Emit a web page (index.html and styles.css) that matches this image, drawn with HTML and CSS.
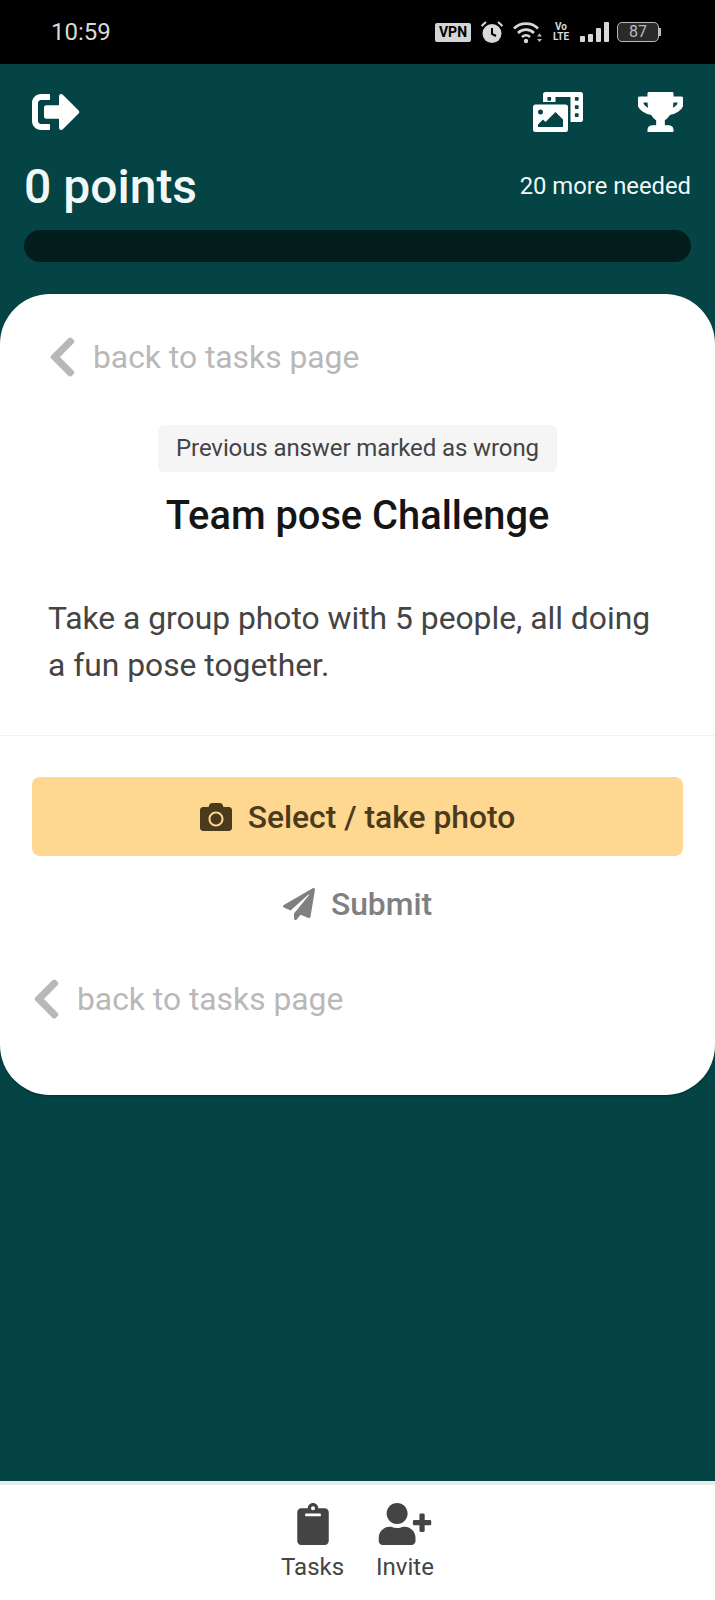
FILE: index.html
```html
<!DOCTYPE html>
<html lang="en">
<head>
    <meta charset="UTF-8">
    <meta name="viewport" content="width=device-width, initial-scale=1.0">
    <title>Team pose Challenge</title>
    <link rel="stylesheet" href="styles.css">
</head>
<body>
    <div class="app">
        <!-- phone status bar -->
        <div class="status-bar">
            <span class="status-time">10:59</span>
            <div class="status-icons">
                <span class="vpn">VPN</span>
                <svg class="st-alarm" viewBox="0 0 24 24"><circle cx="12" cy="13.5" r="9.5" fill="#d8d8d8"/><path d="M12 8v6l4 2" fill="none" stroke="#000" stroke-width="2"/><path d="M1.5 6 6 2M22.5 6 18 2" stroke="#d8d8d8" stroke-width="2" fill="none"/></svg>
                <svg class="st-wifi" viewBox="0 0 30 24"><path d="M1 8.5C7.5 2 18.5 2 25 8.5M5 13c4.5-4.5 11.500-4.500 16 0M9 17c2.500-2.200 5.500-2.200 8 0" fill="none" stroke="#d8d8d8" stroke-width="2.600"/><circle cx="13" cy="21" r="2.200" fill="#d8d8d8"/><path d="M24 16.500h5l-2.500-3zM24 19h5l-2.500 3z" fill="#bbb"/></svg>
                <span class="volte">Vo<br>LTE</span>
                <div class="signal"><i class="s1"></i><i class="s2"></i><i class="s3"></i><i class="s4"></i></div>
                <div class="battery"><span class="battery-body">87</span><span class="battery-tip"></span></div>
            </div>
        </div>

        <div class="main">
            <header class="top">
                <div class="top-icons">
                    <svg class="ic-logout" viewBox="0 0 512 512" preserveAspectRatio="none"><path d="M497 273L329 441c-15 15-41 4.500-41-17v-96H152c-13.300 0-24-10.700-24-24v-96c0-13.300 10.700-24 24-24h136V88c0-21.400 25.900-32 41-17l168 168c9.300 9.400 9.300 24.600 0 34zM192 436v-40c0-6.600-5.400-12-12-12H96c-17.700 0-32-14.300-32-32V160c0-17.700 14.300-32 32-32h84c6.600 0 12-5.400 12-12V76c0-6.600-5.400-12-12-12H96c-53 0-96 43-96 96v192c0 53 43 96 96 96h84c6.600 0 12-5.400 12-12z"/></svg>
                    <div class="top-right">
                        <svg class="ic-gallery" viewBox="0 0 640 512"><path d="M608 0H160a32 32 0 0 0-32 32v96h160V64h192v320h128a32 32 0 0 0 32-32V32a32 32 0 0 0-32-32zM232 103a9 9 0 0 1-9 9h-30a9 9 0 0 1-9-9V73a9 9 0 0 1 9-9h30a9 9 0 0 1 9 9zm352 208a9 9 0 0 1-9 9h-30a9 9 0 0 1-9-9v-30a9 9 0 0 1 9-9h30a9 9 0 0 1 9 9zm0-104a9 9 0 0 1-9 9h-30a9 9 0 0 1-9-9v-30a9 9 0 0 1 9-9h30a9 9 0 0 1 9 9zm0-104a9 9 0 0 1-9 9h-30a9 9 0 0 1-9-9V73a9 9 0 0 1 9-9h30a9 9 0 0 1 9 9zm-168 57H32a32 32 0 0 0-32 32v288a32 32 0 0 0 32 32h384a32 32 0 0 0 32-32V192a32 32 0 0 0-32-32zM96 224a32 32 0 1 1-32 32 32 32 0 0 1 32-32zm288 224H64v-32l64-64 32 32 128-128 96 96z"/></svg>
                        <svg class="ic-trophy" viewBox="0 0 576 512"><path d="M552 64H448V24c0-13.300-10.700-24-24-24H152c-13.300 0-24 10.700-24 24v40H24C10.700 64 0 74.700 0 88v56c0 35.700 22.500 72.400 61.900 100.700 31.500 22.700 69.800 37.100 110 41.700C203.300 338.500 240 360 240 360v72h-48c-35.300 0-64 20.700-64 56v12c0 6.600 5.400 12 12 12h296c6.600 0 12-5.400 12-12v-12c0-35.300-28.700-56-64-56h-48v-72s36.700-21.500 68.100-73.600c40.300-4.600 78.700-19 110-41.700 39.300-28.300 61.900-65 61.900-100.700V88c0-13.300-10.700-24-24-24zM99.300 192.800C74.900 175.200 64 155.600 64 144v-16h64.200c1 32.600 5.800 61.200 12.800 86.200-15.100-5.200-29.200-12.400-41.700-21.400zM512 144c0 16.100-17.700 36.100-35.300 48.800-12.500 9-26.700 16.200-41.800 21.400 7-25 11.800-53.600 12.800-86.200H512v16z"/></svg>
                    </div>
                </div>
                <div class="points-row">
                    <span class="points">0 points</span>
                    <span class="needed">20 more needed</span>
                </div>
                <div class="progress"></div>
            </header>

            <section class="card">
                <div class="task-info">
                    <a class="back-link">
                        <svg viewBox="0 0 320 512"><path d="M34.520 239.030L228.870 44.690c9.370-9.370 24.570-9.370 33.940 0l22.670 22.670c9.360 9.360 9.380 24.520.04 33.900L131.490 256l154.020 154.750c9.340 9.380 9.320 24.540-.04 33.900l-22.670 22.670c-9.370 9.370-24.570 9.370-33.940 0L34.520 272.970c-9.370-9.370-9.370-24.570 0-33.940z"/></svg>
                        back to tasks page
                    </a>
                    <div class="badge-wrap"><span class="badge">Previous answer marked as wrong</span></div>
                    <h2 class="task-title">Team pose Challenge</h2>
                    <p class="task-desc">Take a group photo with 5 people, all doing a fun pose together.</p>
                </div>
                <div class="task-actions">
                    <button class="photo-btn">
                        <svg viewBox="0 0 512 512"><path d="M512 144v288c0 26.500-21.500 48-48 48H48c-26.500 0-48-21.500-48-48V144c0-26.500 21.500-48 48-48h88l12.300-32.900c7-18.700 24.900-31.100 44.900-31.100h125.500c20 0 37.900 12.400 44.900 31.100L376 96h88c26.500 0 48 21.500 48 48zM376 288c0-66.200-53.800-120-120-120s-120 53.800-120 120 53.800 120 120 120 120-53.800 120-120zm-32 0c0 48.500-39.500 88-88 88s-88-39.500-88-88 39.500-88 88-88 88 39.500 88 88z"/></svg>
                        Select / take photo
                    </button>
                    <button class="submit-btn">
                        <svg viewBox="0 0 512 512"><path d="M476 3.200L12.500 270.600c-18.100 10.400-15.800 35.600 2.200 43.200L121 358.400l287.300-253.200c5.500-4.900 13.300 2.600 8.600 8.300L176 407v80.500c0 23.600 28.500 32.900 42.500 15.800L282 426l124.600 52.200c14.200 6 30.400-2.900 33-18.200l72-432C515 7.800 493.300-6.800 476 3.200z"/></svg>
                        Submit
                    </button>
                    <a class="back-link">
                        <svg viewBox="0 0 320 512"><path d="M34.520 239.030L228.870 44.690c9.370-9.370 24.570-9.370 33.940 0l22.670 22.670c9.360 9.360 9.380 24.520.04 33.900L131.490 256l154.020 154.750c9.340 9.380 9.320 24.540-.04 33.900l-22.670 22.670c-9.370 9.370-24.570 9.370-33.940 0L34.520 272.970c-9.370-9.370-9.370-24.570 0-33.940z"/></svg>
                        back to tasks page
                    </a>
                </div>
            </section>
        </div>

        <nav class="bottom-nav">
            <a class="nav-item">
                <svg class="ic-tasks" viewBox="0 0 384 512"><path d="M384 112v352c0 26.510-21.490 48-48 48H48c-26.510 0-48-21.490-48-48V112c0-26.510 21.490-48 48-48h80c0-35.290 28.710-64 64-64s64 28.710 64 64h80c26.510 0 48 21.490 48 48zM192 40c-13.255 0-24 10.745-24 24s10.745 24 24 24 24-10.745 24-24-10.745-24-24-24m96 114v-20a6 6 0 0 0-6-6H102a6 6 0 0 0-6 6v20a6 6 0 0 0 6 6h180a6 6 0 0 0 6-6z"/></svg>
                <span>Tasks</span>
            </a>
            <a class="nav-item">
                <svg class="ic-invite" viewBox="0 0 640 512"><path d="M624 208h-64v-64c0-8.800-7.200-16-16-16h-32c-8.800 0-16 7.200-16 16v64h-64c-8.800 0-16 7.200-16 16v32c0 8.800 7.200 16 16 16h64v64c0 8.800 7.200 16 16 16h32c8.800 0 16-7.200 16-16v-64h64c8.800 0 16-7.200 16-16v-32c0-8.800-7.200-16-16-16zm-400 48c70.700 0 128-57.300 128-128S294.700 0 224 0 96 57.300 96 128s57.300 128 128 128zm89.600 32h-16.700c-22.200 10.200-46.900 16-72.900 16s-50.600-5.800-72.900-16h-16.700C60.200 288 0 348.200 0 422.400V464c0 26.500 21.500 48 48 48h352c26.500 0 48-21.500 48-48v-41.600c0-74.200-60.200-134.400-134.400-134.400z"/></svg>
                <span>Invite</span>
            </a>
        </nav>
    </div>
</body>
</html>
```

FILE: styles.css
```css
* {
    box-sizing: border-box;
    margin: 0;
    padding: 0;
    font-family: Roboto, sans-serif;
}

body {
    background: #044444;
}

.app {
    display: flex;
    flex-direction: column;
    height: 1600px;
    overflow: hidden;
}

/* status bar */
.status-bar {
    height: 64px;
    flex: none;
    background: #000;
    display: flex;
    align-items: center;
    justify-content: space-between;
    padding: 0 54px 0 51px;
    color: #d8d8d8;
}

.status-time {
    font-size: 24px;
}

.status-icons {
    display: flex;
    align-items: center;
}

.vpn {
    background: #d4d4d4;
    color: #000;
    font-size: 14px;
    font-weight: 700;
    line-height: 19px;
    width: 36px;
    text-align: center;
    border-radius: 2px;
}

.st-alarm {
    width: 24px;
    height: 24px;
    margin-left: 9px;
}

.st-wifi {
    width: 30px;
    height: 24px;
    margin-left: 9px;
}

.volte {
    font-size: 10px;
    font-weight: 700;
    line-height: 10px;
    width: 16px;
    margin-left: 10px;
    text-align: center;
}

.signal {
    display: flex;
    align-items: flex-end;
    gap: 3px;
    height: 20px;
    margin-left: 11px;
}

.signal i {
    width: 5px;
    background: #d8d8d8;
    border-radius: 1px;
}

.s1 { height: 6px; }
.s2 { height: 8px; }
.s3 { height: 14px; }
.s4 { height: 20px; }

.battery {
    display: flex;
    align-items: center;
    margin-left: 8px;
}

.battery-body {
    width: 42px;
    height: 20px;
    border: 1.500px solid #bbb;
    border-radius: 5px;
    background: #2a2a2a;
    color: #bbb;
    font-size: 16px;
    line-height: 17px;
    text-align: center;
}

.battery-tip {
    width: 2px;
    height: 8px;
    background: #bbb;
}

/* header */
.main {
    flex: 1;
    background: #044444;
}

.top {
    padding: 28px 24px 32px;
    color: #f2f7f7;
}

.top-icons {
    display: flex;
    justify-content: space-between;
    align-items: center;
    padding: 0 8px;
    height: 40px;
}

.top-icons svg {
    fill: #fff;
    display: block;
}

.ic-logout {
    width: 48px;
    height: 48px;
}

.top-right {
    display: flex;
    align-items: center;
    gap: 55px;
}

.ic-gallery {
    width: 50px;
    height: 40px;
}

.ic-trophy {
    width: 45px;
    height: 40px;
    stroke: #fff;
    stroke-width: 14px;
}

.points-row {
    display: flex;
    justify-content: space-between;
    align-items: center;
    margin-top: 28px;
    height: 52px;
}

.points {
    font-size: 48px;
    font-weight: 500;
}

.needed {
    font-size: 23.8px;
}

.progress {
    height: 32px;
    margin-top: 18px;
    background: #031d1c;
    border-radius: 16px;
}

/* task card */
.card {
    height: 801px;
    background: #fff;
    border-radius: 50px;
    box-shadow: 0 1px 2px rgba(0, 0, 0, 0.3);
}

.task-info {
    height: 442px;
    padding: 42px 48px 0;
    border-bottom: 1px solid #f2f2f2;
}

.back-link {
    display: flex;
    align-items: center;
    gap: 16px;
    height: 42px;
    color: #b8b8b8;
    font-size: 31.8px;
}

.back-link svg {
    width: 29px;
    height: 46px;
    fill: #b8b8b8;
    flex: none;
}

.badge-wrap {
    text-align: center;
    margin-top: 47px;
    height: 47px;
}

.badge {
    display: inline-block;
    background: #f5f5f5;
    color: #444;
    font-size: 24px;
    letter-spacing: -0.1px;
    line-height: 47px;
    padding: 0 18px;
    border-radius: 6px;
}

.task-title {
    text-align: center;
    font-size: 39.8px;
    font-weight: 500;
    line-height: 46px;
    color: #151515;
    margin-top: 21px;
}

.task-desc {
    margin: 56px 10px 0 0;
    font-size: 31.8px;
    line-height: 47px;
    color: #444;
}

.task-actions {
    padding: 41px 32px 0;
}

.task-actions .back-link {
    margin-top: 49px;
}

.photo-btn {
    width: 100%;
    height: 79px;
    border: none;
    border-radius: 8px;
    background: #fed790;
    color: #4c3a1d;
    font-size: 31.8px;
    font-weight: 500;
    display: flex;
    align-items: center;
    justify-content: center;
    gap: 16px;
}

.photo-btn svg {
    width: 32px;
    height: 32px;
    fill: #4c3a1d;
}

.submit-btn {
    width: 100%;
    height: 50px;
    margin-top: 23px;
    border: none;
    background: none;
    color: #808080;
    font-size: 31.8px;
    font-weight: 500;
    display: flex;
    align-items: center;
    justify-content: center;
    gap: 16px;
}

.submit-btn svg {
    width: 32px;
    height: 32px;
    fill: #808080;
}

/* bottom nav */
.bottom-nav {
    height: 119px;
    flex: none;
    background: #fff;
    border-top: 4px solid #e8ecee;
    display: flex;
    justify-content: center;
    gap: 32px;
    padding-top: 18px;
}

.nav-item {
    display: flex;
    flex-direction: column;
    align-items: center;
    color: #444;
    font-size: 24px;
}

.nav-item svg {
    height: 42px;
    fill: #444;
    margin-bottom: 8px;
}

.ic-tasks {
    width: 32px;
}

.ic-invite {
    width: 54px;
}
```
